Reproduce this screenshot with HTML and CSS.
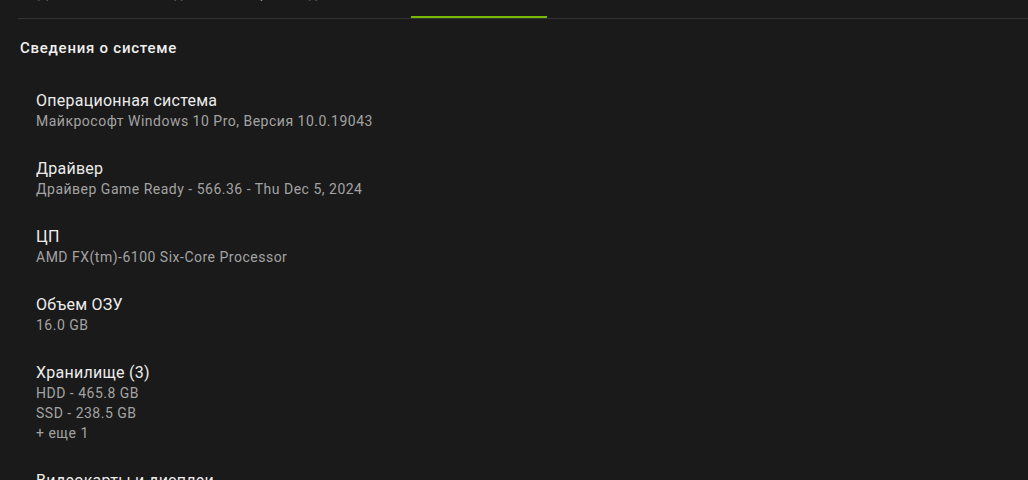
FILE: index.html
```html
<!DOCTYPE html>
<html lang="ru">
<head>
<meta charset="utf-8">
<link rel="stylesheet" href="styles.css">
</head>
<body>
<div class="page">
  <nav class="tabs">
    <div class="tab tab-1"><span class="tab-label">Дисплей</span></div>
    <div class="tab tab-2"><span class="tab-label">Видео</span></div>
    <div class="tab tab-3"><span class="tab-label">Производительность</span></div>
    <div class="tab tab-4 active"><span class="tab-label">Моя система</span></div>
  </nav>
  <main class="content">
    <h2 class="section-title">Сведения о системе</h2>
    <div class="item">
      <div class="item-title">Операционная система</div>
      <div class="item-value">Майкрософт Windows 10 Pro, Версия 10.0.19043</div>
    </div>
    <div class="item">
      <div class="item-title">Драйвер</div>
      <div class="item-value">Драйвер Game Ready - 566.36 - Thu Dec 5, 2024</div>
    </div>
    <div class="item">
      <div class="item-title">ЦП</div>
      <div class="item-value">AMD FX(tm)-6100 Six-Core Processor</div>
    </div>
    <div class="item">
      <div class="item-title">Объем ОЗУ</div>
      <div class="item-value">16.0 GB</div>
    </div>
    <div class="item">
      <div class="item-title">Хранилище (3)</div>
      <div class="item-value">HDD - 465.8 GB</div>
      <div class="item-value">SSD - 238.5 GB</div>
      <div class="item-value">+ еще 1</div>
    </div>
    <div class="item">
      <div class="item-title">Видеокарты и дисплеи</div>
    </div>
  </main>
</div>
</body>
</html>
```

FILE: styles.css
```css
html, body {
  margin: 0;
  padding: 0;
  background: #1a1a1a;
  overflow: hidden;
}
body {
  font-family: Roboto, "Liberation Sans", sans-serif;
  color: #e8e8e8;
}
.page {
  width: 1028px;
  height: 480px;
  overflow: hidden;
}
.tabs {
  display: flex;
  height: 40px;
  margin-top: -22px;
  margin-left: 18px;
  border-bottom: 1px solid #333333;
  box-sizing: content-box;
}
.tab {
  display: flex;
  align-items: flex-end;
  justify-content: center;
  padding-bottom: 13px;
  border-bottom: 2px solid transparent;
  box-sizing: border-box;
  height: 40px;
}
.tab-label {
  font-size: 14px;
  line-height: 20px;
  letter-spacing: 0.4px;
  color: #9a9a9a;
  white-space: nowrap;
}
.tab-1 { width: 100px; }
.tab-2 { width: 120px; }
.tab-3 { width: 170px; }
.tab-4 { width: 136px; margin-left: 3px; }
.tab.active { border-bottom-color: #76b900; }
.tab.active .tab-label { color: #ffffff; }

.content {
  padding: 0 0 0 20px;
}
.section-title {
  margin: 0;
  padding-top: 19px;
  font-size: 15px;
  line-height: 20px;
  font-weight: 500;
  letter-spacing: 0.75px;
  color: #f0f0f0;
}
.item {
  padding: 27px 0 0 16px;
}
.section-title + .item {
  padding-top: 32px;
}
.item-title {
  font-size: 16px;
  line-height: 21px;
  letter-spacing: 0.25px;
  color: #ececec;
}
.item-value {
  font-size: 14px;
  line-height: 20px;
  letter-spacing: 0.5px;
  color: #a3a3a3;
}
```
